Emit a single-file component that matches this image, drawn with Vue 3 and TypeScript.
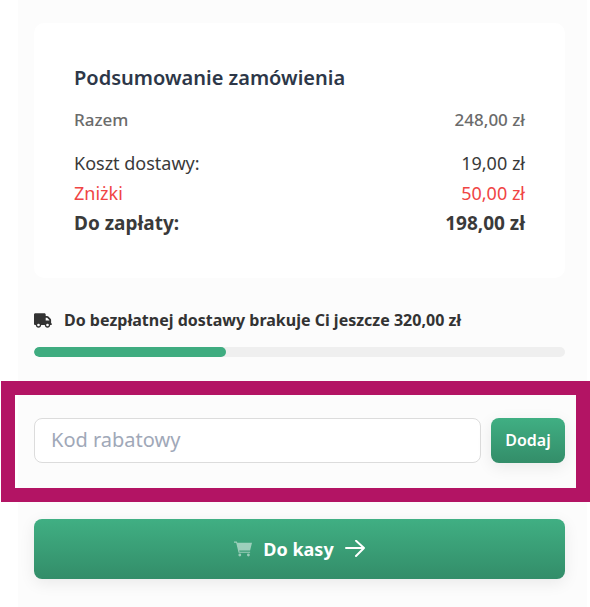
<script setup lang="ts">
import { computed, ref } from 'vue'

const subtotal = 248
const shipping = 19
const discount = 50
const total = 198
const missingForFreeDelivery = 320
const progress = 36.2

const code = ref('')

const format = (value: number): string => `${value.toFixed(2).replace('.', ',')} zł`
const progressWidth = computed(() => `${progress}%`)
</script>

<template>
  <main class="panel">
    <section class="card">
      <h2 class="title">Podsumowanie zamówienia</h2>
      <dl class="rows">
        <div class="row subtotal">
          <dt>Razem</dt>
          <dd>{{ format(subtotal) }}</dd>
        </div>
        <div class="row">
          <dt>Koszt dostawy:</dt>
          <dd>{{ format(shipping) }}</dd>
        </div>
        <div class="row discount">
          <dt>Zniżki</dt>
          <dd>{{ format(discount) }}</dd>
        </div>
        <div class="row total">
          <dt>Do zapłaty:</dt>
          <dd>{{ format(total) }}</dd>
        </div>
      </dl>
    </section>

    <section class="delivery">
      <p class="delivery-text">
        <svg class="truck" viewBox="0 0 640 512" aria-hidden="true">
          <path
            d="M48 0C21.5 0 0 21.5 0 48V368c0 26.5 21.5 48 48 48H64c0 53 43 96 96 96s96-43 96-96H384c0 53 43 96 96 96s96-43 96-96h32c17.7 0 32-14.3 32-32s-14.3-32-32-32V237.3c0-17-6.7-33.3-18.7-45.3L512 114.7c-12-12-28.3-18.7-45.3-18.7H416V48c0-26.5-21.5-48-48-48H48zM416 160h50.7L544 237.3V256H416V160zM112 416a48 48 0 1 1 96 0 48 48 0 1 1 -96 0zm368-48a48 48 0 1 1 0 96 48 48 0 1 1 0-96z"
          />
        </svg>
        <span>Do bezpłatnej dostawy brakuje Ci jeszcze {{ format(missingForFreeDelivery) }}</span>
      </p>
      <div class="track">
        <div class="bar" :style="{ width: progressWidth }"></div>
      </div>
    </section>

    <form class="coupon" @submit.prevent>
      <input v-model="code" class="code" type="text" placeholder="Kod rabatowy" aria-label="Kod rabatowy" />
      <button class="button add" type="submit">Dodaj</button>
    </form>

    <button class="button checkout" type="button">
      <svg class="cart" viewBox="0 0 18 16" aria-hidden="true">
        <path d="M0 .6h2.8l.5 1.2H18l-1.9 7.7H5.2l.3 1.3h10.6v1H4.6L2.2 1.7H0z" />
        <circle cx="5.8" cy="14" r="1.4" />
        <circle cx="14.4" cy="14" r="1.4" />
      </svg>
      <span>Do kasy</span>
      <svg class="arrow" viewBox="0 0 20 18" aria-hidden="true">
        <path d="M1 8h18M11 0.8l8 7.2-8 8" />
      </svg>
    </button>
  </main>
</template>

<style>
body {
  margin: 0;
  background: #fff;
}
</style>

<style scoped>
.panel {
  box-sizing: border-box;
  min-height: 100vh;
  margin: 0 3px 0 18px;
  padding: 23px 22px 28px 16px;
  background: #fcfcfc;
  color: #3a3a3a;
  font-family: "Noto Sans", "Open Sans", sans-serif;
}

.card {
  padding: 40px;
  border-radius: 10px;
  background: #fff;
}

.title {
  margin: 0 0 12px;
  color: #2d3748;
  font-size: 20px;
  font-weight: 600;
  line-height: 30px;
}

.rows {
  margin: 0;
}

.row {
  display: flex;
  justify-content: space-between;
  font-size: 18px;
  line-height: 30px;
}

.row dd {
  margin: 0;
}

.subtotal {
  margin-bottom: 13px;
  color: #6b6b6b;
  font-size: 17px;
  font-weight: 500;
}

.discount {
  color: #f04444;
}

.total {
  font-size: 19px;
  font-weight: 700;
}

.delivery {
  padding: 30px 0 24px;
}

.delivery-text {
  display: flex;
  align-items: center;
  gap: 12px;
  margin: 0 0 15px;
  color: #333;
  font-size: 16px;
  font-weight: 700;
  line-height: 24px;
}

.truck {
  width: 18px;
  height: 15px;
  fill: currentColor;
}

.track {
  height: 10px;
  border-radius: 5px;
  background: #efefef;
  overflow: hidden;
}

.bar {
  height: 100%;
  border-radius: 5px;
  background: #3fac80;
}

.coupon {
  display: flex;
  gap: 10px;
  margin: 0 -25px 17px -33px;
  padding: 23px 11px 25px 19px;
  border: 14px solid #b31464;
}

.code {
  box-sizing: border-box;
  flex: 1;
  min-width: 0;
  height: 45px;
  padding: 0 16px 2px;
  border: 1px solid #dcdcdc;
  border-radius: 8px;
  background: #fff;
  color: #3a3a3a;
  font-family: inherit;
  font-size: 20px;
}

.code::placeholder {
  color: #a0a8b8;
  opacity: 1;
}

.button {
  border: 0;
  border-radius: 8px;
  background: linear-gradient(#40af83, #338d69);
  box-shadow: 0 4px 16px rgba(0, 0, 0, 0.08);
  color: #fff;
  font-family: inherit;
  cursor: pointer;
}

.add {
  min-width: 74px;
  padding: 0 12px 2px;
  font-size: 16px;
  font-weight: 600;
}

.checkout {
  display: flex;
  align-items: center;
  justify-content: center;
  gap: 11px;
  width: 100%;
  height: 60px;
  font-size: 18px;
  font-weight: 700;
}

.cart {
  width: 18px;
  height: 16px;
  fill: currentColor;
  opacity: 0.5;
}

.arrow {
  width: 20px;
  height: 18px;
  fill: none;
  stroke: currentColor;
  stroke-width: 2;
  stroke-linecap: round;
  stroke-linejoin: round;
}
</style>
